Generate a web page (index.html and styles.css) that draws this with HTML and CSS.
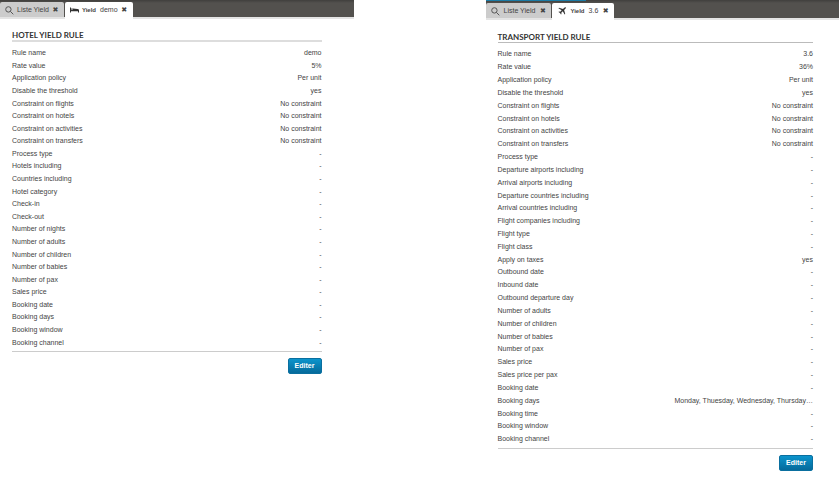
FILE: index.html
```
<!DOCTYPE html>
<html lang="en">
  <head>
    <meta charset="utf-8" />
    <title>Yield rules</title>
    <link rel="stylesheet" href="styles.css">
  </head>

  <body>
    <div id="content">
      <!-- hotel rule -->
      <section class="panel hotel">
        <nav class="tabs">
          <div class="tab">
            <svg class="search" viewBox="0 0 9 9"><circle cx="3.4" cy="3.4" r="2.7" /><path d="M5.4 5.4L8.3 8.3" /></svg>
            <a href="#">Liste Yield</a>
            <button class="close" type="button" aria-label="Close">✖</button>
          </div>
          <div class="tab active">
            <svg class="bed" viewBox="0 0 9 6"><path d="M0 .5h1V3h8v2.500H8V4.200H1v1.300H0zM1.200 1.500h1.600v1.300H1.200zM3 1.500l4.500.500q1.300.200 1.500 1H3z" /></svg>
            <a href="#"><small>Yield</small>demo</a>
            <button class="close" type="button" aria-label="Close">✖</button>
          </div>
        </nav>
        <div class="rule">
          <h2>HOTEL YIELD RULE</h2>
          <table>
            <tr><th>Rule name</th><td>demo</td></tr>
            <tr><th>Rate value</th><td>5%</td></tr>
            <tr><th>Application policy</th><td>Per unit</td></tr>
            <tr><th>Disable the threshold</th><td>yes</td></tr>
            <tr><th>Constraint on flights</th><td>No constraint</td></tr>
            <tr><th>Constraint on hotels</th><td>No constraint</td></tr>
            <tr><th>Constraint on activities</th><td>No constraint</td></tr>
            <tr><th>Constraint on transfers</th><td>No constraint</td></tr>
            <tr><th>Process type</th><td>-</td></tr>
            <tr><th>Hotels including</th><td>-</td></tr>
            <tr><th>Countries including</th><td>-</td></tr>
            <tr><th>Hotel category</th><td>-</td></tr>
            <tr><th>Check-in</th><td>-</td></tr>
            <tr><th>Check-out</th><td>-</td></tr>
            <tr><th>Number of nights</th><td>-</td></tr>
            <tr><th>Number of adults</th><td>-</td></tr>
            <tr><th>Number of children</th><td>-</td></tr>
            <tr><th>Number of babies</th><td>-</td></tr>
            <tr><th>Number of pax</th><td>-</td></tr>
            <tr><th>Sales price</th><td>-</td></tr>
            <tr><th>Booking date</th><td>-</td></tr>
            <tr><th>Booking days</th><td>-</td></tr>
            <tr><th>Booking window</th><td>-</td></tr>
            <tr><th>Booking channel</th><td>-</td></tr>
          </table>
          <div class="buttons">
            <button class="edit" type="button">Editer</button>
          </div>
        </div>
      </section>

      <!-- transport rule -->
      <section class="panel transport">
        <nav class="tabs">
          <div class="tab">
            <svg class="search" viewBox="0 0 9 9"><circle cx="3.4" cy="3.4" r="2.7" /><path d="M5.4 5.4L8.3 8.3" /></svg>
            <a href="#">Liste Yield</a>
            <button class="close" type="button" aria-label="Close">✖</button>
          </div>
          <div class="tab active">
            <svg class="plane" viewBox="0 0 16 16"><path d="M15.500.500q-1.500-.700-3 .800L10 3.800 2 1.500.800 2.700l6.500 3.800L4.500 9.500 2 9 1 10l3 2 2 3 1-1-.500-2.500 3-2.800 3.800 6.500 1.200-1.200L12.200 6l2.500-2.500q1.500-1.500.800-3z" /></svg>
            <a href="#"><small>Yield</small>3.6</a>
            <button class="close" type="button" aria-label="Close">✖</button>
          </div>
        </nav>
        <div class="rule">
          <h2>TRANSPORT YIELD RULE</h2>
          <table>
            <tr><th>Rule name</th><td>3.6</td></tr>
            <tr><th>Rate value</th><td>36%</td></tr>
            <tr><th>Application policy</th><td>Per unit</td></tr>
            <tr><th>Disable the threshold</th><td>yes</td></tr>
            <tr><th>Constraint on flights</th><td>No constraint</td></tr>
            <tr><th>Constraint on hotels</th><td>No constraint</td></tr>
            <tr><th>Constraint on activities</th><td>No constraint</td></tr>
            <tr><th>Constraint on transfers</th><td>No constraint</td></tr>
            <tr><th>Process type</th><td>-</td></tr>
            <tr><th>Departure airports including</th><td>-</td></tr>
            <tr><th>Arrival airports including</th><td>-</td></tr>
            <tr><th>Departure countries including</th><td>-</td></tr>
            <tr><th>Arrival countries including</th><td>-</td></tr>
            <tr><th>Flight companies including</th><td>-</td></tr>
            <tr><th>Flight type</th><td>-</td></tr>
            <tr><th>Flight class</th><td>-</td></tr>
            <tr><th>Apply on taxes</th><td>yes</td></tr>
            <tr><th>Outbound date</th><td>-</td></tr>
            <tr><th>Inbound date</th><td>-</td></tr>
            <tr><th>Outbound departure day</th><td>-</td></tr>
            <tr><th>Number of adults</th><td>-</td></tr>
            <tr><th>Number of children</th><td>-</td></tr>
            <tr><th>Number of babies</th><td>-</td></tr>
            <tr><th>Number of pax</th><td>-</td></tr>
            <tr><th>Sales price</th><td>-</td></tr>
            <tr><th>Sales price per pax</th><td>-</td></tr>
            <tr><th>Booking date</th><td>-</td></tr>
            <tr><th>Booking days</th><td>Monday, Thuesday, Wednesday, Thursday…</td></tr>
            <tr><th>Booking time</th><td>-</td></tr>
            <tr><th>Booking window</th><td>-</td></tr>
            <tr><th>Booking channel</th><td>-</td></tr>
          </table>
          <div class="buttons">
            <button class="edit" type="button">Editer</button>
          </div>
        </div>
      </section>
    </div>
  </body>
</html>
```
FILE: styles.css
```
* {
  box-sizing: border-box;
}

body {
  margin: 0;
  background: #fff;
  color: #444;
  font-family: "Liberation Sans", Arial, sans-serif;
  font-size: 7px;
  line-height: 12px;
}

#content {
  display: grid;
  grid-template-columns: 1fr 1fr;
  column-gap: 132px;
  align-items: start;
}

/* tabs */
.tabs {
  display: flex;
  align-items: flex-end;
  gap: 1px;
  height: 19px;
  border-bottom: 2px solid #e4e4e4;
  background: linear-gradient(#403f3d, #53514e 3px);
}

.transport .tabs {
  height: 20px;
  background: linear-gradient(90deg, #1b7ba5 100px, transparent 100px) top / 100% 1px no-repeat,
    linear-gradient(#403f3d, #53514e 3px);
}

.tab {
  display: flex;
  align-items: center;
  gap: 3px;
  height: 15px;
  padding: 1px 5px 0 5px;
  border-radius: 2px 2px 0 0;
  background: #ccc;
}

.transport .tab {
  gap: 4px;
}

.tab.active {
  height: 17px;
  margin-bottom: -2px;
  padding-bottom: 2px;
  background: #fff;
}

.transport .tab.active {
  padding-left: 6px;
}

.tab a {
  color: #444;
  text-decoration: none;
}

.tab small {
  margin-right: 4px;
  font-size: 6px;
  font-weight: bold;
}

.tab svg {
  fill: #333;
}

.tab .search {
  width: 9px;
  height: 9px;
  fill: none;
  stroke: #555;
}

.bed {
  width: 9px;
  height: 6px;
}

.plane {
  width: 8px;
  height: 8px;
}

.close {
  width: 7px;
  padding: 0;
  border: none;
  background: none;
  color: #444;
  font: 7px/12px "DejaVu Sans", sans-serif;
}

/* rule details */
.rule {
  padding: 11px 32px 0 12px;
}

.transport .rule {
  padding: 12px 26px 0 12px;
}

h2 {
  margin: 0 0 5px;
  border-bottom: 2px solid #ddd;
  color: #333;
  font: bold 8px/10px Lato, sans-serif;
}

.transport h2 {
  border-bottom: 1px solid #bbb;
}

table {
  width: 100%;
  height: 302px;
  border-collapse: collapse;
}

.transport table {
  height: 398px;
}

th,
td {
  padding: 0;
  font-weight: normal;
  text-align: left;
}

td {
  text-align: right;
}

.buttons {
  display: flex;
  justify-content: flex-end;
  margin-top: 2px;
  padding-top: 6px;
  border-top: 1px solid #ccc;
}

.edit {
  width: 34px;
  height: 16px;
  padding: 0;
  border: 1px solid #0a6f9f;
  border-radius: 2px;
  background: linear-gradient(#0c94cc, #056a9b);
  color: #fff;
  font: bold 7px/12px "Liberation Sans", Arial, sans-serif;
}
```
